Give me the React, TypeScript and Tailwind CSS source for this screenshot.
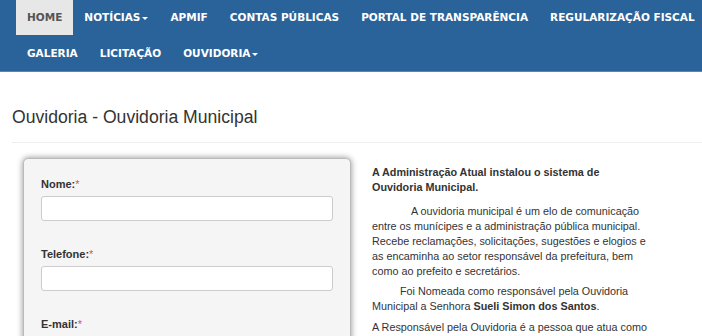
import React from "react";

const navRow1 = [
  { label: "HOME", active: true },
  { label: "NOTÍCIAS", caret: true },
  { label: "APMIF" },
  { label: "CONTAS PÚBLICAS" },
  { label: "PORTAL DE TRANSPARÊNCIA" },
  { label: "REGULARIZAÇÃO FISCAL" },
];

const navRow2 = [
  { label: "GALERIA" },
  { label: "LICITAÇÃO" },
  { label: "OUVIDORIA", caret: true },
];

interface NavItem {
  label: string;
  active?: boolean;
  caret?: boolean;
}

const NavLink = ({ item }: { item: NavItem }) => (
  <a
    className={
      item.active
        ? "flex h-[35px] shrink-0 items-center whitespace-nowrap bg-[#e7e7e7] px-[11px] text-[#555]"
        : "flex h-[35px] shrink-0 items-center whitespace-nowrap px-[11px] text-white"
    }
  >
    {item.label}
    {item.caret && (
      <span className="ml-[2px] mt-[1px] inline-block border-x-[3px] border-t-[3px] border-x-transparent border-t-white" />
    )}
  </a>
);

const Field = ({ label, last }: { label: string; last?: boolean }) => (
  <div className={last ? "" : "mb-[26px]"}>
    <label className="block text-[11px] font-bold leading-[14px] text-[#333]">
      {label}
      <span className="text-[#d9534f] font-normal">*</span>
    </label>
    <div className="mt-[5px] h-[25px] rounded-[3px] border border-[#ccc] bg-white" />
  </div>
);

export default function App() {
  return (
    <div className="h-[336px] w-[702px] overflow-hidden bg-white font-['Liberation_Sans',Arial,sans-serif]">
      <nav className="h-[72px] border-b border-[#5b86b0] bg-[#2a6399] pl-[16px] font-['DejaVu_Sans',Verdana,sans-serif] text-[10.5px] font-bold">
        <div className="flex whitespace-nowrap">
          {navRow1.map((item) => (
            <NavLink key={item.label} item={item} />
          ))}
        </div>
        <div className="mt-[1px] flex">
          {navRow2.map((item) => (
            <NavLink key={item.label} item={item} />
          ))}
        </div>
      </nav>

      <div className="pl-[12px]">
        <h1 className="mt-[34px] border-b border-[#eee] pb-[14px] text-[17.6px] leading-[22px] text-[#333]">
          Ouvidoria - Ouvidoria Municipal
        </h1>
      </div>

      <div className="mt-[15px] flex">
        <div className="ml-[23px] w-[328px] shrink-0">
          <div className="rounded-[5px] border border-[#bbb] bg-[#f5f5f5] px-[17px] pt-[18px] pb-4 shadow-[0_0_6px_rgba(0,0,0,0.45)]">
            <Field label="Nome:" />
            <Field label="Telefone:" />
            <Field label="E-mail:" last />
          </div>
        </div>

        <div className="ml-[21px] pt-[7px] text-[10.8px] leading-[15px] text-[#333]">
          <p className="font-bold">
            A Administração Atual instalou o sistema de
            <br />
            Ouvidoria Municipal.
          </p>
          <p className="mt-[9px]">
            <span className="pl-[39px]" />A ouvidoria municipal é um elo de comunicação
            <br />
            entre os munícipes e a administração pública municipal.
            <br />
            Recebe reclamações, solicitações, sugestões e elogios e
            <br />
            as encaminha ao setor responsável da prefeitura, bem
            <br />
            como ao prefeito e secretários.
          </p>
          <p className="mt-[5px]">
            <span className="pl-[28px]" />Foi Nomeada como responsável pela Ouvidoria
            <br />
            Municipal a Senhora <b>Sueli Simon dos Santos</b>.
          </p>
          <p className="mt-[6px]">A Responsável pela Ouvidoria é a pessoa que atua como</p>
        </div>
      </div>
    </div>
  );
}
